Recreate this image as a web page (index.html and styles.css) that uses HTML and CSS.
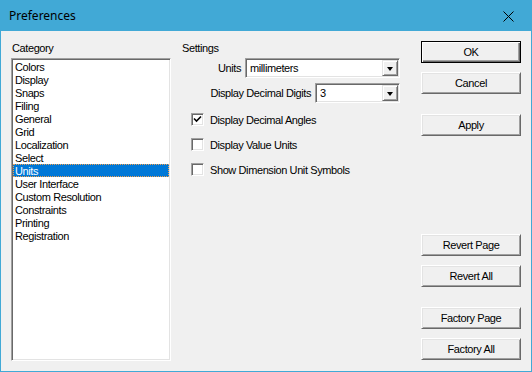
FILE: index.html
```html
<!DOCTYPE html>
<html>
   <head>
      <title>Preferences</title>
      <link rel="stylesheet" href="styles.css">
   </head>
   <body>
      <div class="window">
         <div class="titlebar">
            <span class="title">Preferences</span>
            <svg class="close" width="11" height="11" viewBox="0 0 11 11">
               <path d="M0.5 0.5 L10.5 10.5 M10.5 0.5 L0.5 10.5" stroke="#000" stroke-width="1" fill="none"/>
            </svg>
         </div>
         <div class="content">
            <div class="category">
               <div class="label">Category</div>
               <ul class="listbox">
                  <li>Colors</li>
                  <li>Display</li>
                  <li>Snaps</li>
                  <li>Filing</li>
                  <li>General</li>
                  <li>Grid</li>
                  <li>Localization</li>
                  <li>Select</li>
                  <li class="selected">Units</li>
                  <li>User Interface</li>
                  <li>Custom Resolution</li>
                  <li>Constraints</li>
                  <li>Printing</li>
                  <li>Registration</li>
               </ul>
            </div>

            <div class="settings">
               <div class="label">Settings</div>
               <div class="field">
                  <span class="field-label">Units</span>
                  <div class="combo combo-wide">
                     <span class="combo-text">millimeters</span>
                     <span class="combo-button"><span class="arrow"></span></span>
                  </div>
               </div>
               <div class="field">
                  <span class="field-label">Display Decimal Digits</span>
                  <div class="combo combo-narrow">
                     <span class="combo-text">3</span>
                     <span class="combo-button"><span class="arrow"></span></span>
                  </div>
               </div>
               <div class="checks">
                  <div class="check">
                     <span class="box">
                        <svg width="9" height="9" viewBox="0 0 9 9">
                           <path d="M1 3.5 L3.5 6 L8 1.5" stroke="#000" stroke-width="1.6" fill="none"/>
                        </svg>
                     </span>
                     <span>Display Decimal Angles</span>
                  </div>
                  <div class="check">
                     <span class="box"></span>
                     <span>Display Value Units</span>
                  </div>
                  <div class="check">
                     <span class="box"></span>
                     <span>Show Dimension Unit Symbols</span>
                  </div>
               </div>
            </div>

            <div class="buttons">
               <div class="button-group">
                  <button class="btn btn-default">OK</button>
                  <button class="btn">Cancel</button>
                  <button class="btn btn-apart">Apply</button>
               </div>
               <div class="button-group button-group-bottom">
                  <button class="btn">Revert Page</button>
                  <button class="btn">Revert All</button>
                  <button class="btn btn-apart">Factory Page</button>
                  <button class="btn">Factory All</button>
               </div>
            </div>
         </div>
      </div>
   </body>
</html>
```

FILE: styles.css
```css
body, html {
   margin: 0;
   width: 532px;
   height: 372px;
   overflow: hidden;
   font-family: "Liberation Sans", Arial, sans-serif;
   font-size: 11px;
   letter-spacing: -0.4px;
   color: #000;
}

.window {
   box-sizing: border-box;
   width: 532px;
   height: 372px;
   display: flex;
   flex-direction: column;
   background-color: #f0f0f0;
   border: 1px solid #41a9d6;
   border-top: none;
}

.titlebar {
   height: 31px;
   flex-shrink: 0;
   display: flex;
   align-items: center;
   justify-content: space-between;
   background-color: #41a9d6;
   padding: 0 17px 0 8px;
   letter-spacing: 0;
}

.title {
   font-family: "Noto Sans", sans-serif;
   font-size: 12px;
}

.close {
   display: block;
   margin-top: 1px;
}

.content {
   flex: 1;
   display: flex;
   padding: 10px 10px 10px 10px;
}

.label {
   height: 13px;
   line-height: 13px;
   margin-top: 1px;
   padding-left: 1px;
}

.category {
   width: 160px;
   display: flex;
   flex-direction: column;
}

.listbox {
   flex: 1;
   list-style: none;
   margin: 3px 0 0 0;
   padding: 0;
   background-color: #fff;
   border-top: 1px solid #a0a0a0;
   border-left: 1px solid #a0a0a0;
   border-bottom: 1px solid #fff;
   border-right: 1px solid #fff;
   box-shadow: inset 1px 1px #696969, inset -1px -1px #e3e3e3;
   padding: 1px;
}

.listbox li {
   box-sizing: border-box;
   height: 13px;
   line-height: 14px;
   padding-left: 2px;
}

.listbox .selected {
   background-color: #0078d7;
   color: #fff;
   border: 1px dotted #f0a050;
   line-height: 12px;
   padding-left: 1px;
}

.settings {
   width: 219px;
   margin-left: 10px;
   display: flex;
   flex-direction: column;
}

.field {
   display: flex;
   justify-content: flex-end;
   align-items: center;
   gap: 4px;
   margin-top: 3px;
}

.field + .field {
   margin-top: 5px;
}

.combo {
   box-sizing: border-box;
   height: 20px;
   display: flex;
   align-items: center;
   justify-content: space-between;
   background-color: #fff;
   border-top: 1px solid #a0a0a0;
   border-left: 1px solid #a0a0a0;
   border-bottom: 1px solid #fff;
   border-right: 1px solid #fff;
   box-shadow: inset 1px 1px #696969, inset -1px -1px #e3e3e3;
   padding: 1px 1px 1px 4px;
}

.combo-wide {
   width: 155px;
}

.combo-narrow {
   width: 85px;
}

.combo-button {
   box-sizing: border-box;
   width: 16px;
   height: 16px;
   display: flex;
   align-items: center;
   justify-content: center;
   background-color: #f0f0f0;
   border-top: 1px solid #e3e3e3;
   border-left: 1px solid #e3e3e3;
   border-bottom: 1px solid #696969;
   border-right: 1px solid #696969;
   box-shadow: inset 1px 1px #fff, inset -1px -1px #a0a0a0;
}

.arrow {
   width: 0;
   height: 0;
   border-left: 3.5px solid transparent;
   border-right: 3.5px solid transparent;
   border-top: 4px solid #000;
   margin-top: 1px;
}

.checks {
   display: flex;
   flex-direction: column;
   gap: 12px;
   margin-top: 10px;
   padding-left: 10px;
}

.check {
   display: flex;
   align-items: center;
   gap: 6px;
   height: 13px;
}

.box {
   box-sizing: border-box;
   width: 13px;
   height: 13px;
   display: flex;
   align-items: center;
   justify-content: center;
   background-color: #fff;
   border-top: 1px solid #a0a0a0;
   border-left: 1px solid #a0a0a0;
   border-bottom: 1px solid #fff;
   border-right: 1px solid #fff;
   box-shadow: inset 1px 1px #696969, inset -1px -1px #e3e3e3;
}

.box svg {
   display: block;
}

.buttons {
   width: 100px;
   margin-left: auto;
   display: flex;
   flex-direction: column;
   justify-content: space-between;
   padding-bottom: 1px;
}

.button-group {
   display: flex;
   flex-direction: column;
   gap: 9px;
}

.btn {
   box-sizing: border-box;
   height: 22px;
   width: 100px;
   margin: 0;
   padding: 0;
   font-family: "Liberation Sans", Arial, sans-serif;
   font-size: 11px;
   letter-spacing: -0.4px;
   color: #000;
   background-color: #f0f0f0;
   border-top: 1px solid #fff;
   border-left: 1px solid #fff;
   border-bottom: 1px solid #696969;
   border-right: 1px solid #696969;
   box-shadow: inset 1px 1px #e3e3e3, inset -1px -1px #a0a0a0;
}

.btn-default {
   border: 1px solid #000;
   box-shadow: inset 1px 1px #fff, inset -1px -1px #696969, inset -2px -2px #a0a0a0;
}

.btn-apart {
   margin-top: 11px;
}
```
